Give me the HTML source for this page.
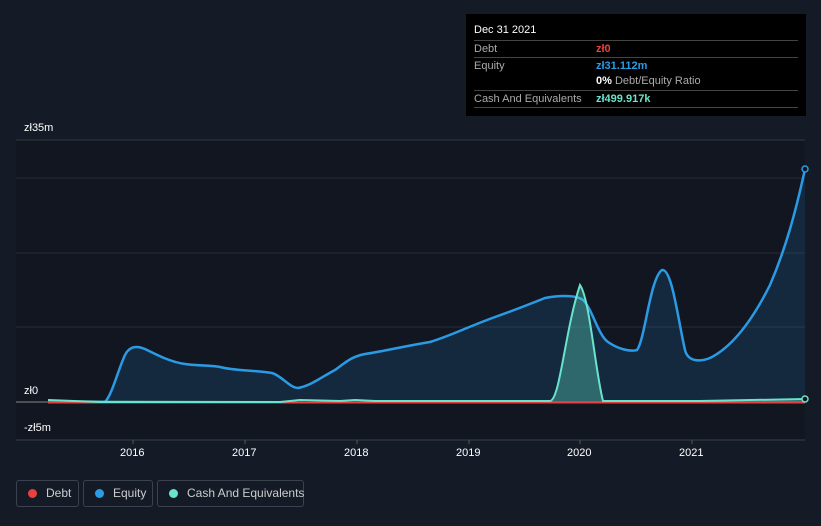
<!DOCTYPE html>
<html><head><style>
body{margin:0;width:821px;height:526px;background:#151b26;font-family:"Liberation Sans",sans-serif;overflow:hidden;position:relative}
.tt{position:absolute;left:466px;top:14px;width:340px;height:102px;background:#000;color:#fff;font-size:11px}
.r{position:absolute;left:8px;width:324px;border-top:1px solid #444;height:16px;line-height:16px;color:#aaa}
.r span{position:absolute;left:122px;font-weight:bold}
.lg{position:absolute;top:480px;height:27px;border:1px solid #3c424d;border-radius:3px;color:#ccc;font-size:12px;line-height:25px;box-sizing:border-box;white-space:nowrap}
.lg i{display:inline-block;width:9px;height:9px;border-radius:50%;margin:0 9px 0 11px;vertical-align:-1px}
.ax{position:absolute;color:#fff;font-size:11px}
</style></head><body>
<svg width="821" height="526" style="position:absolute;left:0;top:0">
<rect x="16" y="140" width="789" height="300" fill="#111620"/>
<line x1="16" y1="140" x2="805" y2="140" stroke="#333a44"/>
<line x1="16" y1="178" x2="805" y2="178" stroke="#262c36"/>
<line x1="16" y1="253" x2="805" y2="253" stroke="#262c36"/>
<line x1="16" y1="327" x2="805" y2="327" stroke="#262c36"/>
<line x1="16" y1="440" x2="805" y2="440" stroke="#3a404a"/>
<g stroke="#555" ><line x1="133" y1="440" x2="133" y2="444"/><line x1="245" y1="440" x2="245" y2="444"/><line x1="357" y1="440" x2="357" y2="444"/><line x1="469" y1="440" x2="469" y2="444"/><line x1="580" y1="440" x2="580" y2="444"/><line x1="692" y1="440" x2="692" y2="444"/></g>
<path d="M48,402 L105,402 C112,395 118,370 125,355 C130,345 138,346 145,349 C155,354 170,362 185,364 C200,366 210,365 220,367 C235,371 255,370 272,373 C282,376 290,388 298,388 C310,386 320,378 335,370 C345,363 350,357 365,354 C385,351 400,347 430,342 C450,336 465,328 495,317 C515,310 530,304 545,298 C555,296 575,294 583,300 C592,308 598,335 608,342 C618,349 630,352 637,350 C645,340 650,278 662,270 C672,268 678,320 685,350 C688,362 700,362 710,358 C730,348 750,325 770,285 C785,250 795,215 805,169" fill="none" stroke="#2b9be6" stroke-width="2.5"/>
<path d="M48,402 L105,402 C112,395 118,370 125,355 C130,345 138,346 145,349 C155,354 170,362 185,364 C200,366 210,365 220,367 C235,371 255,370 272,373 C282,376 290,388 298,388 C310,386 320,378 335,370 C345,363 350,357 365,354 C385,351 400,347 430,342 C450,336 465,328 495,317 C515,310 530,304 545,298 C555,296 575,294 583,300 C592,308 598,335 608,342 C618,349 630,352 637,350 C645,340 650,278 662,270 C672,268 678,320 685,350 C688,362 700,362 710,358 C730,348 750,325 770,285 C785,250 795,215 805,169 L805,402 Z" fill="#2b9be6" fill-opacity="0.15"/>
<line x1="16" y1="402" x2="805" y2="402" stroke="#888" stroke-width="1"/>
<line x1="48" y1="402.5" x2="805" y2="402.5" stroke="#e0403f" stroke-width="2"/>
<path d="M48,400 L100,402 L280,402 L300,400 L340,401 L355,400 L375,401 L550,401 C560,400 565,330 580,285 C590,300 595,370 603,401 L700,401 L805,399 L805,402 L550,402 Z" fill="#5fe0c8" fill-opacity="0.35"/>
<path d="M48,400 L100,402 L280,402 L300,400 L340,401 L355,400 L375,401 L550,401 C560,400 565,330 580,285 C590,300 595,370 603,401 L700,401 L805,399" fill="none" stroke="#6ae3cc" stroke-width="2"/>
<circle cx="805" cy="169" r="3" fill="#111620" stroke="#2b9be6" stroke-width="1.5"/>
<circle cx="805" cy="399" r="3" fill="#111620" stroke="#6ae3cc" stroke-width="1.5"/>
</svg>
<div class="ax" style="left:24px;top:122px">zł35m</div>
<div class="ax" style="left:24px;top:385px">zł0</div>
<div class="ax" style="left:24px;top:422px">-zł5m</div>
<div class="ax" style="left:120px;top:447px">2016</div>
<div class="ax" style="left:232px;top:447px">2017</div>
<div class="ax" style="left:344px;top:447px">2018</div>
<div class="ax" style="left:456px;top:447px">2019</div>
<div class="ax" style="left:567px;top:447px">2020</div>
<div class="ax" style="left:679px;top:447px">2021</div>
<div class="tt">
<div style="position:absolute;left:8px;top:10px;font-size:11px">Dec 31 2021</div>
<div class="r" style="top:26px">Debt<span style="color:#e8413f">zł0</span></div>
<div class="r" style="top:43px">Equity<span style="color:#2b9be6">zł31.112m</span></div>
<div class="r" style="top:59px;border-top:none"><span style="color:#fff">0% <b style="color:#aaa;font-weight:normal">Debt/Equity Ratio</b></span></div>
<div class="r" style="top:76px">Cash And Equivalents<span style="color:#6ae3cc">zł499.917k</span></div>
<div class="r" style="top:93px;height:0"></div>
</div>
<div class="lg" style="left:16px;width:63px"><i style="background:#e8413f"></i>Debt</div>
<div class="lg" style="left:83px;width:70px"><i style="background:#2b9be6"></i>Equity</div>
<div class="lg" style="left:157px;width:147px"><i style="background:#6ae3cc"></i>Cash And Equivalents</div>
</body></html>
